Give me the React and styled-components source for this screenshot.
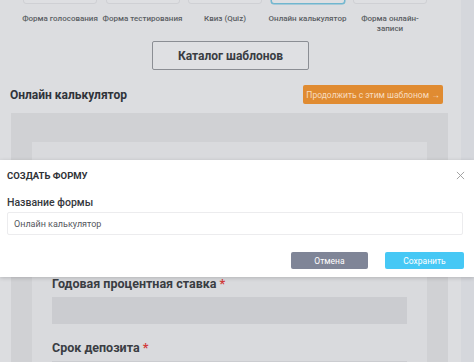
import React from "react";
import styled, { createGlobalStyle } from "styled-components";

const Global = createGlobalStyle`
  html, body { margin: 0; padding: 0; }
  body { font-family: Roboto, "Noto Sans", "Liberation Sans", sans-serif; background: #dcdde0; }
  * { box-sizing: border-box; }
`;

const Page = styled.div`
  position: relative;
  width: 474px;
  height: 362px;
  overflow: hidden;
  display: flex;
  background: #dcdde0;
`;

const Main = styled.div`
  width: 461px;
  display: flex;
  flex-direction: column;
  & > * { flex-shrink: 0; }
`;

const ScrollStrip = styled.div`
  width: 13px;
  background: #d5d7dc;
`;

const Templates = styled.div`
  display: grid;
  grid-template-columns: repeat(5, 74px);
  column-gap: 8.5px;
  padding-left: 23px;
  margin-top: -46px;
`;

const Template = styled.div`
  display: flex;
  flex-direction: column;
  align-items: center;
`;

const Tile = styled.div`
  width: 74px;
  height: 50px;
  border-radius: 3px;
  background: #dedfe2;
  border: 1px solid ${(p) => (p.$active ? "#6fb6cf" : "#cfd0d4")};
  ${(p) => p.$active && "box-shadow: 0 0 0 0.5px #6fb6cf;"}
`;

const TileLabel = styled.div`
  margin-top: 10px;
  font-size: 8px;
  line-height: 9.5px;
  font-weight: 500;
  color: #5a5d63;
  text-align: center;
  width: 80px;
`;

const CatalogButton = styled.button`
  align-self: center;
  margin-top: 8px;
  width: 157px;
  height: 29px;
  border: 1px solid #8b8e94;
  border-radius: 2px;
  background: #dfe0e3;
  font-family: Roboto, "Liberation Sans", sans-serif;
  font-weight: 700;
  font-size: 12px;
  color: #3a3d43;
`;

const HeaderRow = styled.div`
  margin-top: 15px;
  padding: 0 18px 0 10px;
  display: flex;
  align-items: center;
  justify-content: space-between;
  height: 19px;
`;

const Heading = styled.div`
  font-weight: 700;
  font-size: 12px;
  color: #30333a;
`;

const OrangeButton = styled.button`
  width: 140px;
  height: 19px;
  border: none;
  border-radius: 2px;
  background: #e08b31;
  color: #f7dcc0;
  font-family: Roboto, "Liberation Sans", sans-serif;
  font-size: 8.5px;
  padding: 0;
`;

const Panel = styled.div`
  margin: 9px 0 0 11px;
  width: 437px;
  height: 260px;
  background: #d0d1d4;
  padding: 29px 21px 0 21px;
  display: flex;
`;

const Card = styled.div`
  flex: 1;
  background: #d9dadd;
  padding: 134px 20px 0 20px;
`;

const Field = styled.div`
  display: flex;
  flex-direction: column;
  margin-bottom: 16px;
`;

const FieldLabel = styled.div`
  font-weight: 700;
  font-size: 12.5px;
  line-height: 16px;
  color: #3a3d43;
  & span { color: #d23b3b; }
`;

const FieldInput = styled.div`
  margin-top: 5px;
  height: 27px;
  background: #cbccd0;
`;

const Modal = styled.div`
  position: absolute;
  top: 160px;
  left: 0;
  right: 0;
  height: 117px;
  background: #ffffff;
  box-shadow: 0 1px 4px rgba(0, 0, 0, 0.18);
  display: flex;
  flex-direction: column;
`;

const ModalHeader = styled.div`
  height: 30px;
  padding: 0 9px 0 7px;
  display: flex;
  align-items: center;
  justify-content: space-between;
`;

const ModalTitle = styled.div`
  font-weight: 700;
  font-size: 9.5px;
  color: #2f3237;
`;

const Close = styled.svg`
  width: 9px;
  height: 9px;
`;

const ModalBody = styled.div`
  padding: 5px 11px 0 7px;
`;

const Label = styled.div`
  font-weight: 500;
  font-size: 10.5px;
  line-height: 16px;
  color: #35383d;
`;

const Input = styled.div`
  margin-top: 1px;
  height: 23px;
  border: 1px solid #ececee;
  border-radius: 2px;
  padding-left: 6px;
  display: flex;
  align-items: center;
  font-size: 9px;
  color: #55585d;
`;

const Actions = styled.div`
  margin-top: 17px;
  margin-right: -1px;
  display: flex;
  justify-content: flex-end;
  gap: 17px;
`;

const ActionButton = styled.button`
  width: ${(p) => p.$w}px;
  height: 17px;
  border: none;
  border-radius: 2px;
  background: ${(p) => p.$bg};
  color: #ffffff;
  font-family: Roboto, "Liberation Sans", sans-serif;
  font-size: 8.5px;
  padding: 0;
`;

const templates = [
  { label: "Форма голосования" },
  { label: "Форма тестирования" },
  { label: "Квиз (Quiz)" },
  { label: "Онлайн калькулятор", active: true },
  { label: "Форма онлайн-записи" },
];

export default function App() {
  return (
    <>
      <Global />
      <Page>
        <Main>
          <Templates>
            {templates.map((t) => (
              <Template key={t.label}>
                <Tile $active={t.active} />
                <TileLabel>{t.label}</TileLabel>
              </Template>
            ))}
          </Templates>
          <CatalogButton>Каталог шаблонов</CatalogButton>
          <HeaderRow>
            <Heading>Онлайн калькулятор</Heading>
            <OrangeButton>Продолжить с этим шаблоном →</OrangeButton>
          </HeaderRow>
          <Panel>
            <Card>
              <Field>
                <FieldLabel>
                  Годовая процентная ставка <span>*</span>
                </FieldLabel>
                <FieldInput />
              </Field>
              <Field>
                <FieldLabel>
                  Срок депозита <span>*</span>
                </FieldLabel>
                <FieldInput />
              </Field>
            </Card>
          </Panel>
        </Main>
        <ScrollStrip />
        <Modal>
          <ModalHeader>
            <ModalTitle>СОЗДАТЬ ФОРМУ</ModalTitle>
            <Close viewBox="0 0 10 10">
              <path d="M1 1 L9 9 M9 1 L1 9" stroke="#9a9a9a" strokeWidth="1" fill="none" />
            </Close>
          </ModalHeader>
          <ModalBody>
            <Label>Название формы</Label>
            <Input>Онлайн калькулятор</Input>
            <Actions>
              <ActionButton $w={77} $bg="#7f8597">Отмена</ActionButton>
              <ActionButton $w={79} $bg="#46c8f5">Сохранить</ActionButton>
            </Actions>
          </ModalBody>
        </Modal>
      </Page>
    </>
  );
}
